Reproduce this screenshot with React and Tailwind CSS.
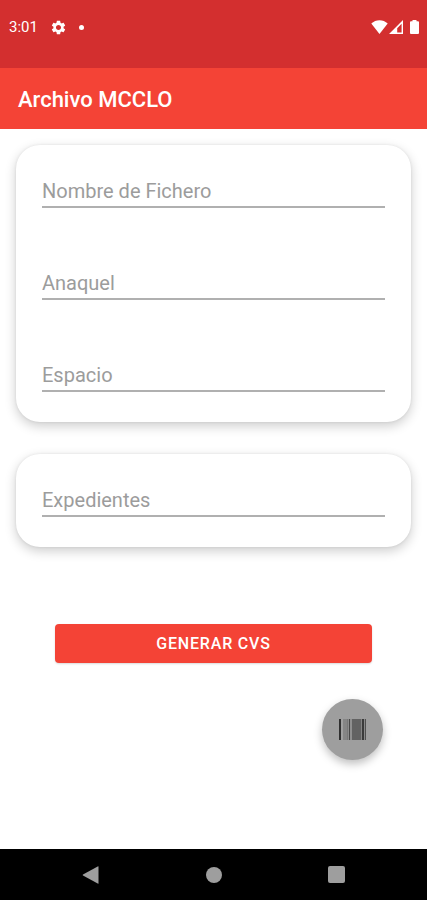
import { useState } from 'react';

const fileFields = [
  { id: 'fichero', label: 'Nombre de Fichero' },
  { id: 'anaquel', label: 'Anaquel' },
  { id: 'espacio', label: 'Espacio' },
];

const recordFields = [{ id: 'expedientes', label: 'Expedientes' }];

function StatusBar() {
  return (
    <div className="flex h-[68px] items-start justify-between bg-[#d32f2f] pt-4 pr-2 pl-[9px] text-white">
      <div className="flex h-[22px] items-center">
        <span className="text-[15px]">3:01</span>
        <svg className="ml-3 h-[17px] w-[17px]" viewBox="0 0 24 24" fill="currentColor">
          <path d="M19.14 12.94c.04-.3.06-.61.06-.94 0-.32-.02-.64-.07-.94l2.03-1.58c.18-.14.23-.41.12-.61l-1.92-3.32c-.12-.22-.37-.29-.59-.22l-2.39.96c-.5-.38-1.03-.7-1.62-.94l-.36-2.54c-.04-.24-.24-.41-.48-.41h-3.84c-.24 0-.43.17-.47.41l-.36 2.54c-.59.24-1.13.57-1.62.94l-2.39-.96c-.22-.08-.47 0-.59.22L2.74 8.87c-.12.21-.08.47.12.61l2.03 1.58c-.05.3-.09.63-.09.94s.02.64.07.94l-2.03 1.58c-.18.14-.23.41-.12.61l1.92 3.32c.12.22.37.29.59.22l2.39-.96c.5.38 1.03.7 1.62.94l.36 2.54c.05.24.24.41.48.41h3.84c.24 0 .44-.17.47-.41l.36-2.54c.59-.24 1.13-.56 1.62-.94l2.39.96c.22.08.47 0 .59-.22l1.92-3.32c.12-.22.07-.47-.12-.61l-2.01-1.58zM12 15.6c-1.98 0-3.6-1.62-3.6-3.6s1.62-3.6 3.6-3.6 3.6 1.62 3.6 3.6-1.62 3.6-3.6 3.6z" />
        </svg>
        <span className="ml-3 h-[5px] w-[5px] rounded-full bg-white" />
      </div>
      <div className="flex h-[22px] items-center">
        <svg className="h-3.5 w-[17px]" viewBox="0 0 17 14" fill="currentColor">
          <path d="M8.5 14 0.3 3.6C2.6 1.4 5.4 0.2 8.5 0.2s5.9 1.2 8.2 3.4z" />
        </svg>
        <svg className="ml-px h-3.5 w-3.5" viewBox="0 0 14 14" fill="currentColor">
          <path fillRule="evenodd" d="M14 0v14H0zM12.6 3.8 8.2 8.2v4.2h4.4z" />
        </svg>
        <svg className="ml-[7px] h-3.5 w-[9px]" viewBox="0 0 9 14" fill="currentColor">
          <path d="M2.5 0h4v1.3H8q1 0 1 1V13q0 1-1 1H1q-1 0-1-1V2.3q0-1 1-1h1.5z" />
        </svg>
      </div>
    </div>
  );
}

function FieldCard({ fields, values, onChange }) {
  return (
    <div className="flex flex-col gap-[52px] rounded-3xl bg-white px-[26px] pt-[23px] pb-[30px] shadow-[0_4px_12px_rgba(0,0,0,0.2),0_0_3px_rgba(0,0,0,0.08)]">
      {fields.map((field) => (
        <input
          key={field.id}
          type="text"
          id={field.id}
          aria-label={field.label}
          placeholder={field.label}
          value={values[field.id] || ''}
          onChange={(e) => onChange(field.id, e.target.value)}
          className="block h-10 w-full border-b-2 border-[#b0b0b0] bg-transparent pt-2 text-xl text-gray-800 outline-none placeholder:text-[#9c9c9c]"
        />
      ))}
    </div>
  );
}

function NavigationBar() {
  return (
    <nav className="flex h-[51px] items-center justify-center bg-black text-[#9e9e9e]">
      <button type="button" aria-label="Back" className="flex w-[123px] justify-center">
        <svg className="h-[18px] w-[18px]" viewBox="0 0 18 18" fill="currentColor">
          <path d="M16.5.8v16.4q0 .8-.8.4L1 9.500q-.8-.5 0-1L15.700.400q.8-.4.8.4z" />
        </svg>
      </button>
      <button type="button" aria-label="Home" className="flex w-[123px] justify-center">
        <span className="h-4 w-4 rounded-full bg-[#9e9e9e]" />
      </button>
      <button type="button" aria-label="Recent apps" className="flex w-[123px] justify-center">
        <span className="h-[17px] w-[17px] rounded-xs bg-[#9e9e9e]" />
      </button>
    </nav>
  );
}

export default function App() {
  const [values, setValues] = useState({});

  const handleChange = (id, value) => {
    setValues((prev) => ({ ...prev, [id]: value }));
  };

  return (
    <div className="flex min-h-screen flex-col bg-white font-[Roboto,sans-serif]">
      <StatusBar />
      <header className="flex h-[61px] items-center bg-[#f44336] px-[18px] pt-0.5">
        <h1 className="text-[22px] font-medium text-white">Archivo MCCLO</h1>
      </header>

      <main className="flex flex-1 flex-col px-4 pt-4">
        <form onSubmit={(e) => e.preventDefault()} className="flex flex-col gap-8">
          <FieldCard fields={fileFields} values={values} onChange={handleChange} />
          <FieldCard fields={recordFields} values={values} onChange={handleChange} />
          <button
            type="submit"
            className="mx-[39px] mt-[45px] h-[39px] rounded-sm bg-[#f44336] text-base font-medium tracking-wider text-white uppercase shadow-[0_1px_2px_rgba(0,0,0,0.15)]"
          >
            Generar CVS
          </button>
        </form>
        <button
          type="button"
          aria-label="Escanear"
          className="mt-9 mr-7 flex h-[61px] w-[61px] items-center justify-center self-end rounded-full bg-[#9e9e9e] shadow-[0_4px_8px_rgba(0,0,0,0.25)]"
        >
          <svg className="h-[21px] w-[27px]" viewBox="0 0 27 21">
            <rect width="27" height="21" fill="#8c8c8c" />
            <rect width="2" height="21" fill="#303030" />
            <rect x="2" width="2" height="21" fill="#a0a0a0" />
            <rect x="4" width="4" height="21" fill="#858585" />
            <rect x="8" width="1" height="21" fill="#777" />
            <rect x="10" width="1" height="21" fill="#484848" />
            <rect x="11" width="2" height="21" fill="#8f8f8f" />
            <rect x="13" width="9" height="21" fill="#626262" />
            <rect x="22" width="1" height="21" fill="#858585" />
            <rect x="23" width="2" height="21" fill="#3a3a3a" />
            <rect x="25" width="1" height="21" fill="#8a8a8a" />
            <rect x="26" width="1" height="21" fill="#505050" />
          </svg>
        </button>
      </main>

      <NavigationBar />
    </div>
  );
}
